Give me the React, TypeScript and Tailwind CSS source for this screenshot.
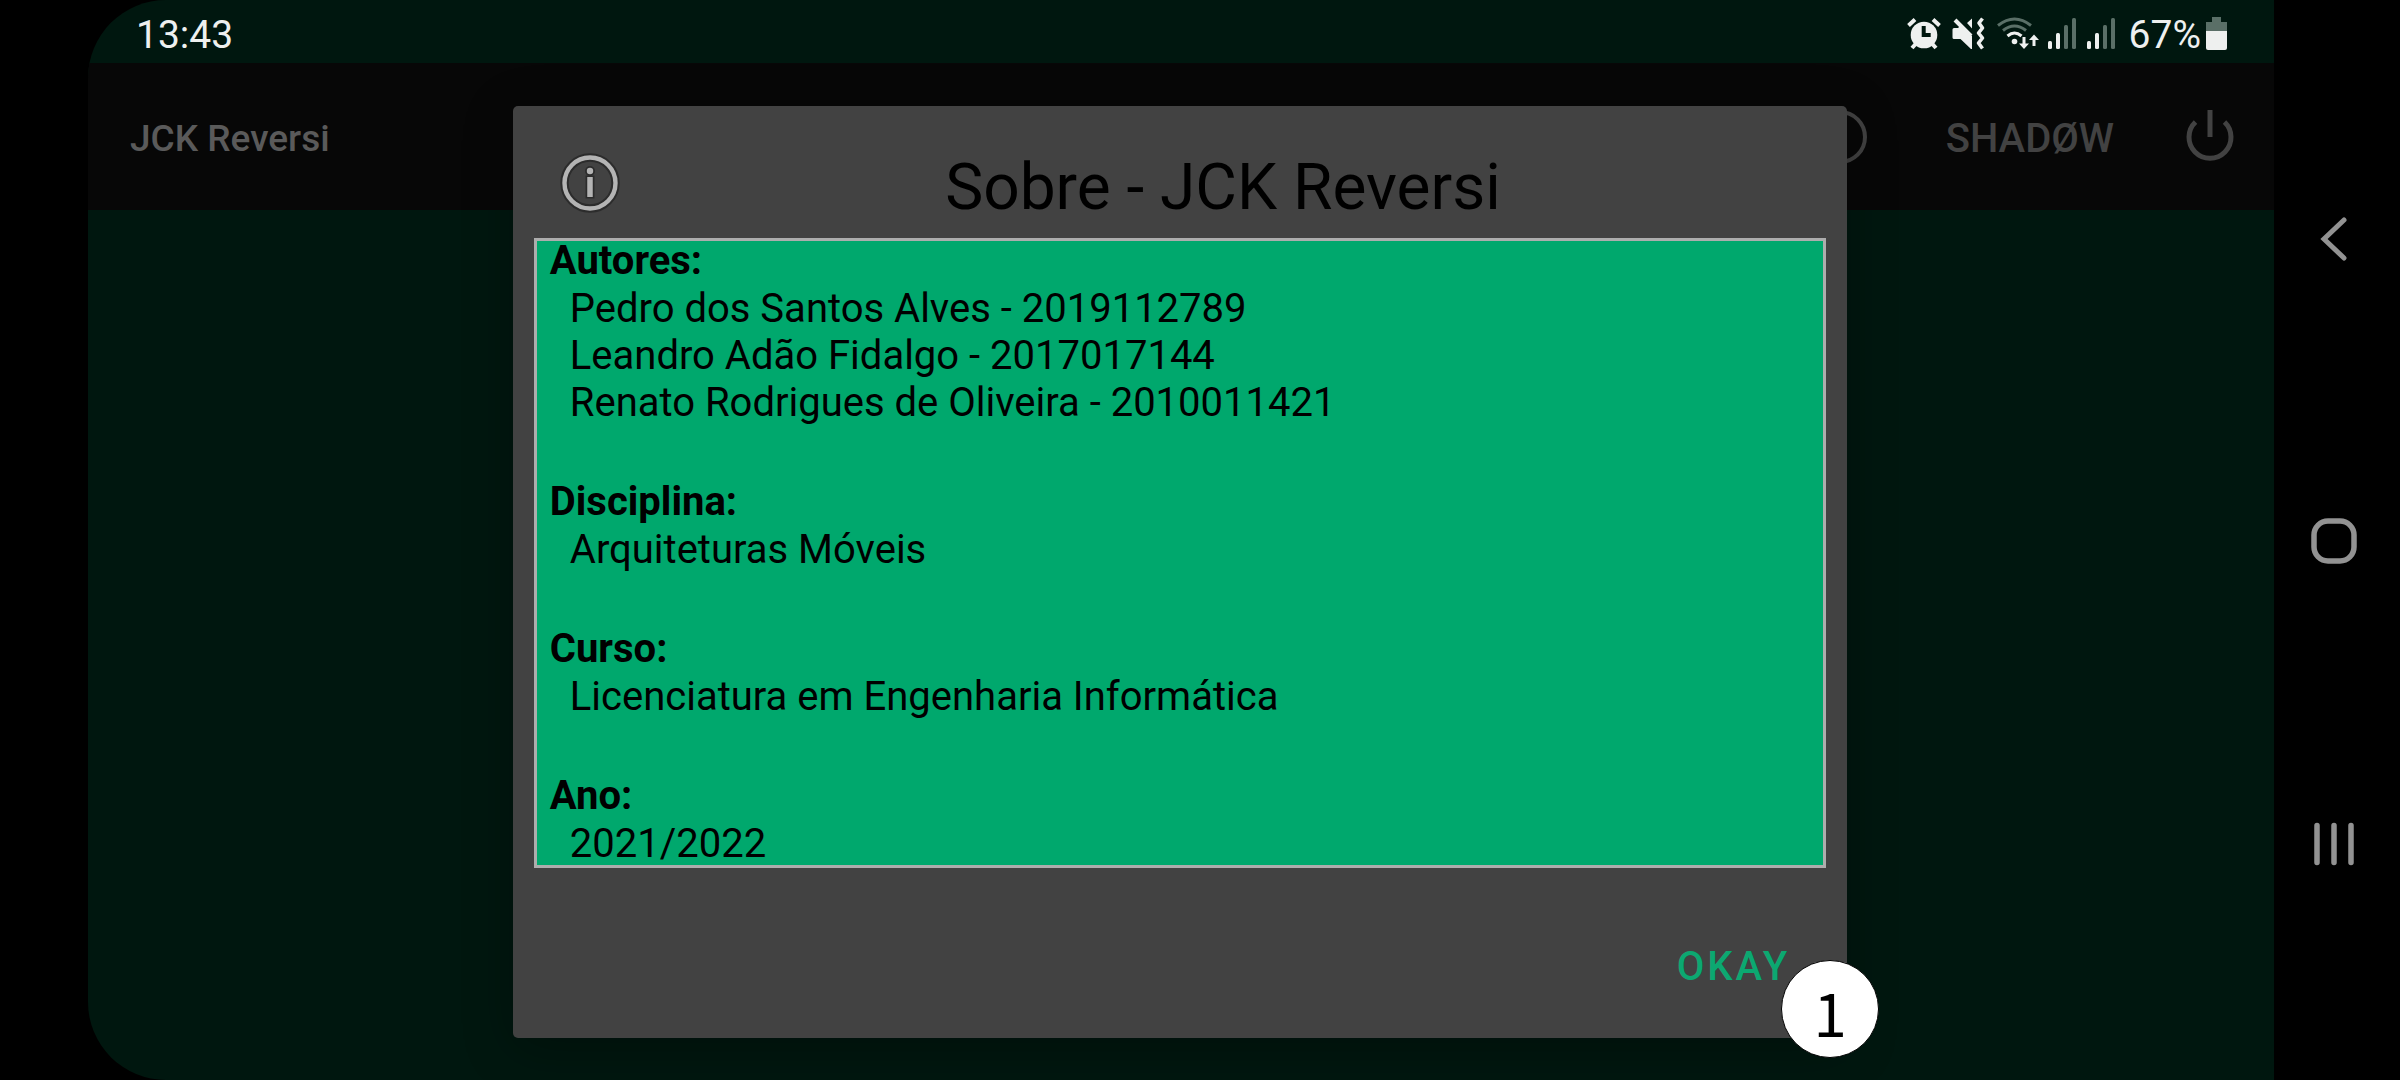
const sections = [
  {
    title: 'Autores:',
    lines: [
      'Pedro dos Santos Alves - 2019112789',
      'Leandro Adão Fidalgo - 2017017144',
      'Renato Rodrigues de Oliveira - 2010011421',
    ],
  },
  { title: 'Disciplina:', lines: ['Arquiteturas Móveis'] },
  { title: 'Curso:', lines: ['Licenciatura em Engenharia Informática'] },
  { title: 'Ano:', lines: ['2021/2022'] },
];

function AlarmIcon() {
  return (
    <svg width="34" height="34" viewBox="0 0 34 34" aria-label="Alarme">
      <g stroke="#eef0ef" fill="none" strokeWidth="4">
        <path d="M1.500 8.500 8 2.500M32.500 8.500 26 2.500" />
        <path d="M9.500 26 5 31M24.500 26l4.500 5" />
      </g>
      <circle cx="17" cy="18" r="13.300" fill="#eef0ef" />
      <path d="M16.700 9v9h7" stroke="#00170f" strokeWidth="4" fill="none" />
    </svg>
  );
}

function MuteIcon() {
  return (
    <svg width="34" height="34" viewBox="0 0 34 34" aria-label="Vibrar">
      <path d="M2 11h4l3-3 11 11v13h-1L8.500 22H2q-1.500 0-1.500-1.500v-8Q.5 11 2 11zM20 1.500v10l-5-5.500z" fill="#eef0ef" />
      <path d="M3 3 19 19" stroke="#eef0ef" strokeWidth="4" />
      <path
        d="M30.500 1.500 27 6l3.500 5-4 5 4 5-4 5 4 5.500"
        fill="none"
        stroke="#eef0ef"
        strokeWidth="3.600"
        strokeLinejoin="round"
      />
    </svg>
  );
}

function WifiIcon() {
  return (
    <svg width="42" height="34" viewBox="0 0 42 34" aria-label="Wi-Fi">
      <g fill="none" strokeWidth="3">
        <path d="M1 8.500Q17.500-4.500 34 8.500" stroke="#5a6f67" />
        <path d="M6 13.500Q17.500 4.500 29 13.500" stroke="#5a6f67" />
        <path d="M10.500 19Q17.500 13 24.500 19" stroke="#eef0ef" />
      </g>
      <circle cx="17.500" cy="24.500" r="2.800" fill="#eef0ef" />
      <path d="M27 20v8M37 29v-8" stroke="#eef0ef" strokeWidth="3" />
      <path d="M22 26.500h10l-5 5.500zM32 23h10l-5-5.500z" fill="#eef0ef" />
    </svg>
  );
}

function SignalIcon() {
  return (
    <svg width="28" height="31" viewBox="0 0 28 31" aria-label="Sinal">
      <rect x="0" y="23" width="4" height="8" rx="1.500" fill="#eef0ef" />
      <rect x="8" y="15" width="4" height="16" rx="1.500" fill="#eef0ef" />
      <rect x="16" y="7" width="4" height="24" rx="1.500" fill="#5a6f67" />
      <rect x="24" y="0" width="4" height="31" rx="1.500" fill="#5a6f67" />
    </svg>
  );
}

function BatteryIcon() {
  return (
    <svg width="21" height="33" viewBox="0 0 21 33" aria-label="Bateria">
      <path d="M6 0h9v5h6v9H0V5h6z" fill="#5a6f67" />
      <path d="M0 14h21v17q0 2-2 2H2q-2 0-2-2z" fill="#eef0ef" />
    </svg>
  );
}

function StatusBar() {
  return (
    <div className="flex h-[63px] items-center justify-between pt-1 pr-[47px] pl-12 text-[39px] leading-[42px] text-[#eef0ef]">
      <time className="pt-0.5">13:43</time>
      <div className="flex items-center">
        <div className="mr-[9px] flex items-center gap-[11px]">
          <AlarmIcon />
          <MuteIcon />
          <WifiIcon />
        </div>
        <div className="flex items-center gap-[11px]">
          <SignalIcon />
          <SignalIcon />
        </div>
        <span className="mr-[5px] ml-[14px] pt-0.5">67%</span>
        <BatteryIcon />
      </div>
    </div>
  );
}

function AppBar() {
  return (
    <header className="flex h-[147px] items-center bg-[#070707] pr-10 pl-[42px]">
      <h1 className="flex-1 pt-1 text-[37px] font-medium text-[#5a5a5a]">JCK Reversi</h1>
      <button aria-label="Sobre" className="mr-[79px] rounded-full">
        <svg width="54" height="54" viewBox="0 0 54 54" className="block">
          <circle cx="27" cy="27" r="25" fill="none" stroke="#424242" strokeWidth="4" />
        </svg>
      </button>
      <button className="mr-[72px] pt-1 text-[40px] font-medium text-[#424242]">SHADØW</button>
      <button aria-label="Sair">
        <svg width="48" height="54" viewBox="0 0 48 54" className="block" fill="none" stroke="#424242" strokeWidth="5">
          <path d="M24 0v27M9.500 12A21 21 0 1 0 38.500 12" />
        </svg>
      </button>
    </header>
  );
}

function NavBar() {
  return (
    <nav className="flex w-[126px] flex-col pt-[88px] pr-1.5 pb-[85px] text-[#929292]">
      <button aria-label="Voltar" className="flex flex-1 items-center justify-center">
        <svg width="30" height="46" viewBox="0 0 30 46" fill="none" stroke="currentColor" strokeWidth="5" strokeLinecap="round">
          <path d="M25 4 5 23 25 42" />
        </svg>
      </button>
      <button aria-label="Início" className="flex flex-1 items-center justify-center">
        <svg width="46" height="46" viewBox="0 0 46 46" fill="none" stroke="currentColor" strokeWidth="5.500">
          <rect x="3" y="3" width="40" height="40" rx="14" />
        </svg>
      </button>
      <button aria-label="Recentes" className="flex flex-1 items-center justify-center">
        <svg width="42" height="44" viewBox="0 0 42 44" fill="none" stroke="currentColor" strokeWidth="5.500" strokeLinecap="round">
          <path d="M4 3.500v37M21 3.500v37M38 3.500v37" />
        </svg>
      </button>
    </nav>
  );
}

function InfoIcon() {
  return (
    <svg width="60" height="60" viewBox="0 0 60 60" fill="none" className="mt-1 shrink-0">
      <circle cx="30" cy="30" r="25.500" stroke="#2c2c2c" strokeWidth="8.500" />
      <circle cx="30" cy="30" r="25.500" stroke="#b4b4b4" strokeWidth="4.400" />
      <path d="M30 22.500v23" stroke="#2c2c2c" strokeWidth="9" />
      <circle cx="30" cy="18" r="5" fill="#2c2c2c" />
      <path d="M30 24v20" stroke="#b4b4b4" strokeWidth="5.500" />
      <circle cx="30" cy="18" r="3.200" fill="#b4b4b4" />
    </svg>
  );
}

function AboutDialog() {
  return (
    <section
      role="dialog"
      aria-labelledby="about-title"
      className="relative flex w-[61.1%] flex-col rounded-[5px] bg-[#424242] px-[21px] pt-[43px] pb-[35px] text-black shadow-[0_10px_50px_rgba(0,0,0,0.3)]"
    >
      <div className="flex items-start pb-3 pl-[26px]">
        <InfoIcon />
        <h2 id="about-title" className="flex-1 text-center text-[64px] leading-[77px]">
          Sobre - JCK Reversi
        </h2>
      </div>
      <div className="flex max-h-[630px] flex-col gap-14 overflow-hidden border-[3px] border-[#adadad] bg-[#00a86d] px-[13px] text-[40px] leading-[47px]">
        {sections.map((section) => (
          <div key={section.title}>
            <h3 className="pb-1 leading-10 font-bold">{section.title}</h3>
            {section.lines.map((line) => (
              <p key={line} className="pl-5">
                {line}
              </p>
            ))}
          </div>
        ))}
      </div>
      <div className="flex justify-end pt-[63px] pr-9">
        <button className="h-[72px] text-[40px] font-medium tracking-[3px] text-[#0ca871]">OKAY</button>
      </div>
      <div className="absolute -right-8 -bottom-5 flex size-[98px] items-center justify-center rounded-full border border-black bg-white pt-1 font-['Noto_Sans_CJK_JP',sans-serif] text-[60px] leading-none">
        1
      </div>
    </section>
  );
}

export default function App() {
  return (
    <div className="flex min-h-screen bg-black pl-[88px] font-[Roboto,sans-serif]">
      <main className="relative flex-1 overflow-hidden rounded-l-[78px] bg-[#00170f]">
        <StatusBar />
        <AppBar />
        <div className="absolute inset-0 flex items-center justify-center pt-[63px] pr-0.5">
          <AboutDialog />
        </div>
      </main>
      <NavBar />
    </div>
  );
}
